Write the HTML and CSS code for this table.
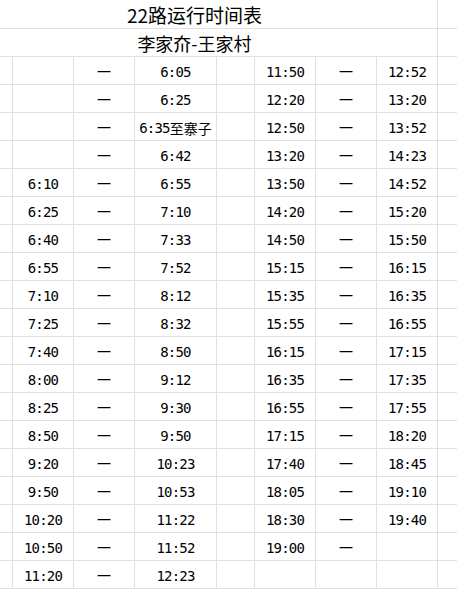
FILE: index.html
```html
<!DOCTYPE html>
<html lang="zh-CN">
<head>
<meta charset="utf-8">
<title>22路运行时间表</title>
<link rel="stylesheet" href="styles.css">
</head>
<body>
<div class="sheet">
  <div class="title-cell first"><span class="title">22路运行时间表</span></div>
  <div class="edge first"></div>
  <div class="title-cell"><span class="subtitle">李家夼-王家村</span></div>
  <div class="edge"></div>

  <div class="c"></div><div class="c"></div><div class="c d">一</div><div class="c">6:05</div><div class="c"></div><div class="c">11:50</div><div class="c d">一</div><div class="c">12:52</div><div class="c e"></div>
  <div class="c"></div><div class="c"></div><div class="c d">一</div><div class="c">6:25</div><div class="c"></div><div class="c">12:20</div><div class="c d">一</div><div class="c">13:20</div><div class="c e"></div>
  <div class="c"></div><div class="c"></div><div class="c d">一</div><div class="c">6:35<span class="cjk">至寨子</span></div><div class="c"></div><div class="c">12:50</div><div class="c d">一</div><div class="c">13:52</div><div class="c e"></div>
  <div class="c"></div><div class="c"></div><div class="c d">一</div><div class="c">6:42</div><div class="c"></div><div class="c">13:20</div><div class="c d">一</div><div class="c">14:23</div><div class="c e"></div>
  <div class="c"></div><div class="c">6:10</div><div class="c d">一</div><div class="c">6:55</div><div class="c"></div><div class="c">13:50</div><div class="c d">一</div><div class="c">14:52</div><div class="c e"></div>
  <div class="c"></div><div class="c">6:25</div><div class="c d">一</div><div class="c">7:10</div><div class="c"></div><div class="c">14:20</div><div class="c d">一</div><div class="c">15:20</div><div class="c e"></div>
  <div class="c"></div><div class="c">6:40</div><div class="c d">一</div><div class="c">7:33</div><div class="c"></div><div class="c">14:50</div><div class="c d">一</div><div class="c">15:50</div><div class="c e"></div>
  <div class="c"></div><div class="c">6:55</div><div class="c d">一</div><div class="c">7:52</div><div class="c"></div><div class="c">15:15</div><div class="c d">一</div><div class="c">16:15</div><div class="c e"></div>
  <div class="c"></div><div class="c">7:10</div><div class="c d">一</div><div class="c">8:12</div><div class="c"></div><div class="c">15:35</div><div class="c d">一</div><div class="c">16:35</div><div class="c e"></div>
  <div class="c"></div><div class="c">7:25</div><div class="c d">一</div><div class="c">8:32</div><div class="c"></div><div class="c">15:55</div><div class="c d">一</div><div class="c">16:55</div><div class="c e"></div>
  <div class="c"></div><div class="c">7:40</div><div class="c d">一</div><div class="c">8:50</div><div class="c"></div><div class="c">16:15</div><div class="c d">一</div><div class="c">17:15</div><div class="c e"></div>
  <div class="c"></div><div class="c">8:00</div><div class="c d">一</div><div class="c">9:12</div><div class="c"></div><div class="c">16:35</div><div class="c d">一</div><div class="c">17:35</div><div class="c e"></div>
  <div class="c"></div><div class="c">8:25</div><div class="c d">一</div><div class="c">9:30</div><div class="c"></div><div class="c">16:55</div><div class="c d">一</div><div class="c">17:55</div><div class="c e"></div>
  <div class="c"></div><div class="c">8:50</div><div class="c d">一</div><div class="c">9:50</div><div class="c"></div><div class="c">17:15</div><div class="c d">一</div><div class="c">18:20</div><div class="c e"></div>
  <div class="c"></div><div class="c">9:20</div><div class="c d">一</div><div class="c">10:23</div><div class="c"></div><div class="c">17:40</div><div class="c d">一</div><div class="c">18:45</div><div class="c e"></div>
  <div class="c"></div><div class="c">9:50</div><div class="c d">一</div><div class="c">10:53</div><div class="c"></div><div class="c">18:05</div><div class="c d">一</div><div class="c">19:10</div><div class="c e"></div>
  <div class="c"></div><div class="c">10:20</div><div class="c d">一</div><div class="c">11:22</div><div class="c"></div><div class="c">18:30</div><div class="c d">一</div><div class="c">19:40</div><div class="c e"></div>
  <div class="c"></div><div class="c">10:50</div><div class="c d">一</div><div class="c">11:52</div><div class="c"></div><div class="c">19:00</div><div class="c d">一</div><div class="c"></div><div class="c e"></div>
  <div class="c"></div><div class="c">11:20</div><div class="c d">一</div><div class="c">12:23</div><div class="c"></div><div class="c"></div><div class="c"></div><div class="c"></div><div class="c e"></div>
</div>
</body>
</html>
```

FILE: styles.css
```css
html, body {
  margin: 0;
  padding: 0;
  background: #ffffff;
}

.sheet {
  display: grid;
  grid-template-columns: 13px 61px 61px 82px 38px 61px 61px 61px 1fr;
  grid-template-rows: 29px;
  grid-auto-rows: 28px;
  width: 457px;
  color: #000000;
  font-family: "DejaVu Sans Mono", "Noto Sans CJK SC", monospace;
  font-size: 14px;
}

.title-cell {
  grid-column: 1 / 9;
  box-sizing: border-box;
  border-right: 1px solid #e0e0e0;
  border-bottom: 1px solid #e0e0e0;
  display: flex;
  align-items: center;
  justify-content: center;
  padding: 0 61px 0 13px;
  font-family: "Noto Sans CJK SC", sans-serif;
}

.title-cell.first {
  padding-top: 0;
}

.edge {
  box-sizing: border-box;
  border-bottom: 1px solid #e0e0e0;
}

.title {
  font-size: 19px;
  line-height: 1;
}

.subtitle {
  font-size: 18px;
  line-height: 1;
}

.c {
  box-sizing: border-box;
  border-right: 1px solid #e0e0e0;
  border-bottom: 1px solid #e0e0e0;
  display: flex;
  align-items: center;
  justify-content: center;
  padding-top: 3px;
  letter-spacing: -0.8px;
  white-space: nowrap;
  line-height: 1;
}

.c.e {
  border-right: none;
}

.c.d {
  font-family: "Noto Sans CJK SC", sans-serif;
  font-size: 14px;
  letter-spacing: 0;
  padding-top: 0;
}

.cjk {
  font-family: "Noto Sans CJK SC", sans-serif;
  letter-spacing: 0;
  font-size: 14px;
}
```
